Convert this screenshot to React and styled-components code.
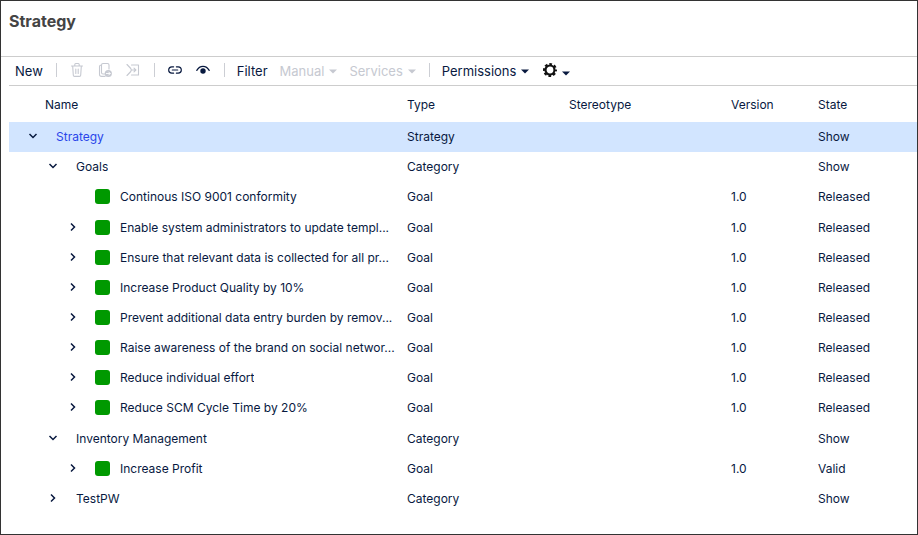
import React, { useState } from "react";
import styled, { createGlobalStyle } from "styled-components";

const GlobalStyle = createGlobalStyle`
  * { box-sizing: border-box; }
  body {
    margin: 0;
    background: #fff;
    color: #08193f;
    font: 12px/16px Inter, "Liberation Sans", sans-serif;
  }
`;

const Frame = styled.main`
  min-height: 100vh;
  border: 1px solid #333;
`;

const Title = styled.h1`
  margin: 0;
  padding: 8px 8px 23px;
  font-size: 16px;
  line-height: 24px;
  font-weight: 700;
  color: #444;
`;

const Content = styled.section`
  border-top: 1px solid #cdcdcd;
  padding-left: 8px;
`;

const Toolbar = styled.div`
  display: flex;
  align-items: center;
  height: 29px;
  border-bottom: 1px solid #cdcdcd;
  padding-left: 6px;
`;

const Group = styled.div`
  display: flex;
  align-items: center;
  gap: ${(p) => p.$gap || 12}px;
`;

const Divider = styled.span`
  width: 1px;
  height: 14px;
  margin: 0 12px 2px 13px;
  background: #ccced4;
`;

const ToolButton = styled.button`
  display: flex;
  align-items: center;
  gap: 5px;
  padding: 0;
  border: 0;
  background: none;
  font: 13px/18px Inter, "Liberation Sans", sans-serif;
  color: inherit;
  cursor: pointer;
  &:disabled { color: #c6c9d1; cursor: default; }
`;

const IconButton = styled(ToolButton)`
  width: 16px;
  height: 18px;
  padding-bottom: 2px;
  justify-content: center;
  svg { flex: none; }
`;

const GearButton = styled(ToolButton)`
  align-items: center;
  padding-bottom: 2px;
  color: #111;
`;

const LowCaret = styled.span`
  display: flex;
  padding-top: 6px;
  color: #08193f;
`;

const Tree = styled.table`
  width: 100%;
  table-layout: fixed;
  border-collapse: collapse;
`;

const Column = styled.col`
  width: ${(p) => p.$width};
`;

const HeadCell = styled.th`
  height: 36px;
  padding: 2px 0 0 ${(p) => (p.$name ? 36 : 10)}px;
  text-align: left;
  font-weight: 400;
`;

const Cell = styled.td`
  padding: 0 0 0 10px;
  white-space: nowrap;
`;

const Row = styled.tr`
  height: ${(p) => (p.$spaced ? 31 : 30)}px;
  background: ${(p) => (p.$selected ? "#d2e5ff" : "transparent")};
  border-bottom: 1px solid #fff;
  ${Cell} { padding-bottom: ${(p) => (p.$spaced ? 2 : 0)}px; }
`;

const NameCell = styled(Cell)`
  padding-left: ${(p) => 16 + p.$level * 20}px;
`;

const NameContent = styled.div`
  display: flex;
  align-items: flex-start;
`;

const Toggle = styled.button`
  display: flex;
  align-items: center;
  justify-content: center;
  flex: none;
  width: 16px;
  height: 14px;
  padding: 0;
  border: 0;
  background: none;
  color: inherit;
  visibility: ${(p) => (p.$hidden ? "hidden" : "visible")};
`;

const GoalMark = styled.span`
  flex: none;
  width: 15px;
  height: 15px;
  margin-left: 14px;
  border-radius: 3px;
  background: #009900;
`;

const Name = styled.span`
  margin-left: ${(p) => (p.$goal ? 10 : 15)}px;
  overflow: hidden;
`;

const NameLink = styled.a`
  margin-left: 15px;
  color: #2a46ea;
  text-decoration: none;
`;

const Caret = () => (
  <svg width="8" height="5" viewBox="0 0 8 5" aria-hidden="true">
    <path d="M0 .5h8L4 4.5z" fill="currentColor" />
  </svg>
);

const line = { fill: "none", stroke: "currentColor", strokeLinecap: "round", strokeLinejoin: "round" };

const TrashIcon = () => (
  <svg width="14" height="16" viewBox="0 0 14 16" {...line} strokeWidth="1.1">
    <path d="M1.5 4h11M4.8 4V2.6Q4.8 1.5 5.8 1.5h2.4q1 0 1 1.1V4M2.7 4.2l.6 9q.1 1.2 1.2 1.2h5q1.1 0 1.2-1.2l.6-9M5.8 7v4.4M8.2 7v4.4" />
  </svg>
);

const CopyIcon = () => (
  <svg width="14" height="16" viewBox="0 0 14 16" {...line} strokeWidth="1.1">
    <path d="M11 7V3q0-1.500-1.500-1.500H5Q3.500 1.500 3.500 3v7.500Q3.500 12 5 12h1.500M3.300 3Q1.500 3 1.500 4.500V12.500Q1.500 14.400 3.500 14.400H7" />
    <circle cx="10.300" cy="11.500" r="3.600" fill="currentColor" stroke="none" />
    <path d="M8.400 11.500h3.600M10.700 10l1.500 1.500-1.500 1.500" stroke="#fff" strokeWidth=".9" />
  </svg>
);

const MergeIcon = () => (
  <svg width="14" height="16" viewBox="0 0 14 16" {...line} strokeWidth="1.1">
    <path d="M5.500 3H12.500V13H5.500M1 2.500l3.800 4q1.200 1.500 0 3l-3.800 4M5 8h4.800M8 6.200L9.900 8 8 9.800" />
  </svg>
);

const LinkIcon = () => (
  <svg width="14" height="10" viewBox="0 0 14 10" {...line} strokeWidth="1.2">
    <path d="M5.600 1.800H3.900a3.200 3.200 0 0 0 0 6.400h1.700M8.400 1.800h1.700a3.200 3.200 0 0 1 0 6.400H8.400M4.300 5h5.400" />
  </svg>
);

const EyeIcon = () => (
  <svg width="14" height="10" viewBox="0 0 14 10" {...line} strokeWidth="1.2">
    <path d="M.8 5.400C2.300 2.600 4.400 1.300 7 1.300s4.700 1.300 6.200 4.100" />
    <circle cx="7" cy="6" r="2.700" fill="currentColor" stroke="none" />
  </svg>
);

const GearIcon = () => (
  <svg width="14" height="14" viewBox="0 0 14 14" fill="none" stroke="currentColor">
    <circle cx="7" cy="7" r="4.500" strokeWidth="2.200" />
    <circle cx="7" cy="7" r="6" strokeWidth="2" strokeDasharray="2.700 2.012" strokeDashoffset="1.350" />
  </svg>
);

const Chevron = ({ open }) => (
  <svg width="10" height="10" viewBox="0 0 10 10" fill="none" stroke="currentColor" strokeWidth="1.500" aria-hidden="true">
    <path d={open ? "M1.500 3L5 6.500 8.500 3" : "M3 1.500L6.500 5 3 8.500"} />
  </svg>
);

const rows = [
  { name: "Strategy", level: 0, type: "Strategy", state: "Show", open: true, selected: true },
  { name: "Goals", level: 1, type: "Category", state: "Show", open: true },
  { name: "Continous ISO 9001 conformity", level: 2, type: "Goal", version: "1.0", state: "Released", leaf: true, spaced: true },
  { name: "Enable system administrators to update templ...", level: 2, type: "Goal", version: "1.0", state: "Released" },
  { name: "Ensure that relevant data is collected for all pr...", level: 2, type: "Goal", version: "1.0", state: "Released" },
  { name: "Increase Product Quality by 10%", level: 2, type: "Goal", version: "1.0", state: "Released" },
  { name: "Prevent additional data entry burden by remov...", level: 2, type: "Goal", version: "1.0", state: "Released" },
  { name: "Raise awareness of the brand on social networ...", level: 2, type: "Goal", version: "1.0", state: "Released" },
  { name: "Reduce individual effort", level: 2, type: "Goal", version: "1.0", state: "Released" },
  { name: "Reduce SCM Cycle Time by 20%", level: 2, type: "Goal", version: "1.0", state: "Released", spaced: true },
  { name: "Inventory Management", level: 1, type: "Category", state: "Show", open: true },
  { name: "Increase Profit", level: 2, type: "Goal", version: "1.0", state: "Valid" },
  { name: "TestPW", level: 1, type: "Category", state: "Show" },
];

function TreeRow({ row }) {
  const [open, setOpen] = useState(Boolean(row.open));
  const goal = row.type === "Goal";
  return (
    <Row $selected={row.selected} $spaced={row.spaced}>
      <NameCell $level={row.level}>
        <NameContent>
          <Toggle $hidden={row.leaf} aria-label={`Toggle ${row.name}`} aria-expanded={open} onClick={() => setOpen(!open)}>
            <Chevron open={open} />
          </Toggle>
          {goal && <GoalMark />}
          {row.selected ? <NameLink href="#strategy">{row.name}</NameLink> : <Name $goal={goal}>{row.name}</Name>}
        </NameContent>
      </NameCell>
      <Cell>{row.type}</Cell>
      <Cell />
      <Cell>{row.version}</Cell>
      <Cell>{row.state}</Cell>
    </Row>
  );
}

export default function App() {
  return (
    <Frame>
      <GlobalStyle />
      <Title>Strategy</Title>
      <Content>
        <Toolbar role="toolbar" aria-label="Strategy actions">
          <ToolButton>New</ToolButton>
          <Divider />
          <Group>
            <IconButton disabled aria-label="Delete"><TrashIcon /></IconButton>
            <IconButton disabled aria-label="Copy"><CopyIcon /></IconButton>
            <IconButton disabled aria-label="Move"><MergeIcon /></IconButton>
          </Group>
          <Divider />
          <Group>
            <IconButton aria-label="Link"><LinkIcon /></IconButton>
            <IconButton aria-label="View"><EyeIcon /></IconButton>
          </Group>
          <Divider />
          <Group>
            <ToolButton>Filter</ToolButton>
            <ToolButton disabled>Manual <Caret /></ToolButton>
            <ToolButton disabled>Services <Caret /></ToolButton>
          </Group>
          <Divider />
          <Group $gap={14}>
            <ToolButton>Permissions <Caret /></ToolButton>
            <GearButton aria-label="Settings"><GearIcon /><LowCaret><Caret /></LowCaret></GearButton>
          </Group>
        </Toolbar>
        <Tree>
          <colgroup>
            <Column $width="auto" />
            <Column $width="162px" />
            <Column $width="162px" />
            <Column $width="87px" />
            <Column $width="109px" />
          </colgroup>
          <thead>
            <tr>
              <HeadCell $name>Name</HeadCell>
              <HeadCell>Type</HeadCell>
              <HeadCell>Stereotype</HeadCell>
              <HeadCell>Version</HeadCell>
              <HeadCell>State</HeadCell>
            </tr>
          </thead>
          <tbody>
            {rows.map((row) => <TreeRow key={row.name} row={row} />)}
          </tbody>
        </Tree>
      </Content>
    </Frame>
  );
}
